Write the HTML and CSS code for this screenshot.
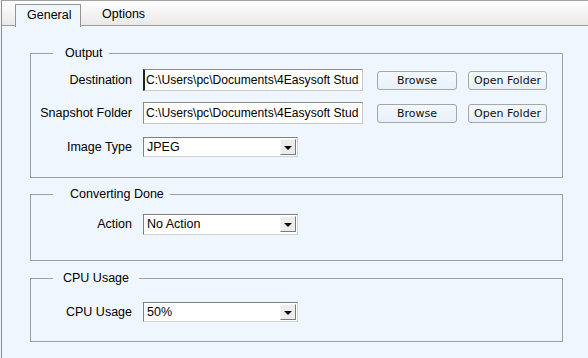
FILE: index.html
```html
<!DOCTYPE html>
<html lang="en">
<head>
    <meta charset="UTF-8">
    <title>Preferences</title>
    <link rel="stylesheet" href="styles.css">
</head>
<body>
    <div class="window">
        <div class="tabbar">
            <div class="tab active">General</div>
            <div class="tab">Options</div>
        </div>

        <div class="panel">
            <fieldset class="group output">
                <legend>Output</legend>
                <div class="row">
                    <label>Destination</label>
                    <div class="field caret">C:\Users\pc\Documents\4Easysoft Stud</div>
                    <button class="btn browse">Browse</button>
                    <button class="btn">Open Folder</button>
                </div>
                <div class="row">
                    <label>Snapshot Folder</label>
                    <div class="field">C:\Users\pc\Documents\4Easysoft Stud</div>
                    <button class="btn browse">Browse</button>
                    <button class="btn">Open Folder</button>
                </div>
                <div class="row type">
                    <label>Image Type</label>
                    <div class="combo"><span>JPEG</span><i class="arrow"></i></div>
                </div>
            </fieldset>

            <fieldset class="group done">
                <legend>Converting Done</legend>
                <div class="row">
                    <label>Action</label>
                    <div class="combo tall"><span>No Action</span><i class="arrow"></i></div>
                </div>
            </fieldset>

            <fieldset class="group cpu">
                <legend>CPU Usage</legend>
                <div class="row">
                    <label>CPU Usage</label>
                    <div class="combo"><span>50%</span><i class="arrow"></i></div>
                </div>
            </fieldset>
        </div>
    </div>
</body>
</html>
```

FILE: styles.css
```css
body {
    margin: 0;
    font-family: 'Liberation Sans', Arial, sans-serif;
    font-size: 12.5px;
    color: #000;
    background: #f0f6fd;
    overflow: hidden;
}
.window {
    height: 357px;
    margin-left: 1px;
    border-top: 1px solid #a3a3a3;
    border-left: 1px solid #8c8c8c;
    background: #f0f6fd;
}
.tabbar {
    display: flex;
    height: 24px;
    padding-left: 13px;
    border-bottom: 1px solid #9c9c9c;
    background: linear-gradient(#fefefe, #ebe8e8);
}
.tab {
    margin-top: 3px;
    padding: 0 11px;
    line-height: 20px;
    height: 21px;
}
.tab.active {
    width: 42px;
    height: 22px;
    margin-bottom: -1px;
    border: 1px solid #949494;
    border-bottom: none;
    background: #f0f6fd;
}
.tab + .tab {
    margin-left: 10px;
}
.panel {
    padding-left: 28px;
}
.group {
    width: 531px;
    margin: 0;
    padding: 0;
    border: 1px solid #a0a0a0;
}
.group legend {
    margin-left: 22px;
    padding: 0 6px 0 12px;
    line-height: 14px;
}
.output {
    margin-top: 20px;
    padding: 9px 0 19px;
}
.done {
    margin-top: 9px;
    padding: 12px 0 25px;
}
.done legend {
    padding-left: 17px;
}
.cpu {
    margin-top: 10px;
    padding: 16px 0 18px;
}
.cpu legend {
    padding-left: 10px;
    padding-right: 10px;
}
.row {
    display: flex;
    align-items: center;
    height: 22px;
}
.row + .row {
    margin-top: 11px;
}
.row.type {
    margin-top: 12px;
}
.row label {
    width: 101px;
    padding-right: 11px;
    text-align: right;
}
.field {
    box-sizing: border-box;
    width: 220px;
    height: 22px;
    padding-left: 2px;
    font-size: 12.1px;
    line-height: 20px;
    white-space: nowrap;
    overflow: hidden;
    background: #fff;
    border: 1px solid #c8c8c8;
    border-top-color: #8a8a8a;
    border-left-color: #8a8a8a;
}
.field.caret {
    border-left: 2px solid #222;
    padding-left: 1px;
}
.btn {
    box-sizing: border-box;
    width: 79px;
    height: 19px;
    margin-left: 11px;
    padding: 0;
    font-family: 'DejaVu Sans', Tahoma, sans-serif;
    font-size: 11px;
    color: #111;
    background: linear-gradient(#f3f8fd, #e8f0fa);
    border: 1px solid #a6a6a6;
    border-radius: 3px;
}
.btn.browse {
    width: 80px;
    margin-left: 14px;
}
.combo {
    box-sizing: border-box;
    display: flex;
    align-items: center;
    justify-content: space-between;
    width: 155px;
    height: 20px;
    padding: 0 1px 0 3px;
    background: #fff;
    border: 1px solid #d0d0d0;
    border-top-color: #808080;
    border-left-color: #808080;
}
.combo.tall {
    height: 21px;
}
.arrow {
    position: relative;
    box-sizing: border-box;
    width: 16px;
    height: 16px;
    background: #ececec;
    border: 1px solid #f8f8f8;
    border-right-color: #7a7a7a;
    border-bottom-color: #7a7a7a;
}
.arrow::after {
    content: "";
    position: absolute;
    left: 3px;
    top: 6px;
    border-left: 4px solid transparent;
    border-right: 4px solid transparent;
    border-top: 4px solid #000;
}
```
